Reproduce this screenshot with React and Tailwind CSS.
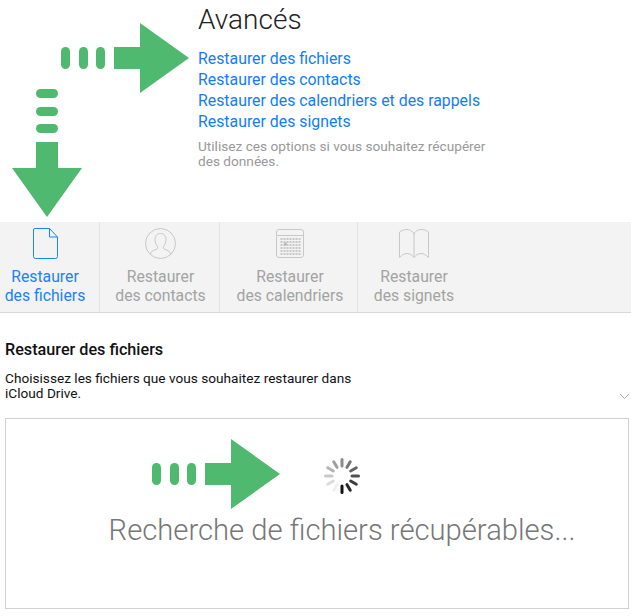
function Arrow({ className }) {
  return (
    <svg className={className} width="128" height="70" viewBox="0 0 128 70" fill="#4fb96f">
      <rect x="0" y="24" width="9" height="22" rx="4.5" />
      <rect x="18" y="24" width="9" height="22" rx="4.5" />
      <rect x="35" y="24" width="9" height="22" rx="4.5" />
      <path d="M53 24H79V0L128 35L79 70V46H53Z" />
    </svg>
  );
}

function ArrowDown({ className }) {
  return (
    <svg className={className} width="70" height="128" viewBox="0 0 70 128" fill="#4fb96f">
      <rect x="24" y="0" width="22" height="9" rx="4.5" />
      <rect x="24" y="18" width="22" height="9" rx="4.5" />
      <rect x="24" y="35" width="22" height="9" rx="4.5" />
      <path d="M24 53H46V79H70L35 128L0 79H24Z" />
    </svg>
  );
}

function Spinner() {
  const bars = [];
  for (let i = 0; i < 12; i++) {
    const shade = 20 + i * 20;
    bars.push(
      <rect
        key={i}
        x="16.5"
        y="0"
        width="3"
        height="9.5"
        rx="1.5"
        fill={`rgb(${shade},${shade},${shade})`}
        transform={`rotate(${180 - i * 30} 18 18)`}
      />
    );
  }
  return (
    <svg width="36" height="36" viewBox="0 0 36 36">
      {bars}
    </svg>
  );
}

function FileIcon() {
  return (
    <svg width="25" height="31" viewBox="0 0 25 31" fill="none" stroke="#1a82fb" strokeWidth="1">
      <path d="M2 .5H16.5L24.5 9V28.5A2 2 0 0 1 22.5 30.5H2.5A2 2 0 0 1 .5 28.5V2A1.5 1.5 0 0 1 2 .5Z" />
      <path d="M16.5 .5V9H24.5" />
    </svg>
  );
}

function ContactIcon() {
  return (
    <svg width="31" height="31" viewBox="0 0 31 31" fill="none" stroke="#c8c8c8" strokeWidth="1">
      <circle cx="15.5" cy="15.5" r="15" />
      <path d="M5.5 26.5C6 23 8 22.5 11 21.5C12.5 21 13 20 12.5 18.5C11 16.5 10 14 10 11.5C10 8 12 5.5 15.5 5.5C19 5.5 21 8 21 11.5C21 14 20 16.5 18.5 18.5C18 20 18.5 21 20 21.5C23 22.5 25 23 25.5 26.5" />
    </svg>
  );
}

function CalendarIcon() {
  const dots = [];
  for (let r = 0; r < 6; r++) {
    for (let c = 0; c < 7; c++) {
      dots.push(<rect key={`${r}-${c}`} x={5 + c * 3} y={9.5 + r * 3} width="1" height="1" fill="#d0d0d0" />);
    }
  }
  return (
    <svg width="28" height="29" viewBox="0 0 28 29" fill="none" stroke="#c8c8c8" strokeWidth="1">
      <rect x=".5" y=".5" width="27" height="28" rx="2.5" />
      <path d="M.5 6.5H27.5" />
      {dots}
      <circle cx="9.5" cy="15" r="1.5" fill="#b5b5b5" stroke="none" />
    </svg>
  );
}

function BookIcon() {
  return (
    <svg width="30" height="30" viewBox="0 0 30 30" fill="none" stroke="#c8c8c8" strokeWidth="1">
      <path d="M15 5.5C14 2.5 11.5 .5 8 .5C5 .5 2.5 1.5 .5 3V28.5C3 26 5.5 24.5 8 24.5C11 24.5 13.5 26.5 15 28.5C16.5 26.5 19 24.5 22 24.5C24.5 24.5 27 26 29.5 28.5V3C27.5 1.5 25 .5 22 .5C18.5 .5 16 2.5 15 5.5Z" />
      <path d="M15 5.5V28.5" />
    </svg>
  );
}

const tabs = [
  { l1: "Restaurer", l2: "des fichiers", w: "w-[100px] pr-[9px]", icon: <FileIcon />, active: true },
  { l1: "Restaurer", l2: "des contacts", w: "w-[120px] pl-[2px]", icon: <ContactIcon /> },
  { l1: "Restaurer", l2: "des calendriers", w: "w-[138px] pl-[3px]", icon: <CalendarIcon /> },
  { l1: "Restaurer", l2: "des signets", w: "w-[112px]", icon: <BookIcon />, last: true },
];

export default function App() {
  return (
    <div className="relative w-[631px] h-[616px] bg-white overflow-hidden font-['Roboto',sans-serif]">
      <Arrow className="absolute left-[61px] top-[23px]" />
      <ArrowDown className="absolute left-[12px] top-[89px]" />
      <Arrow className="absolute left-[152px] top-[439px]" />

      <div className="h-[222px] pl-[198px] pt-[2px]">
        <h1 className="text-[28px] leading-9 font-light text-[#222]">Avancés</h1>
        <div className="mt-[10px] flex flex-col text-[15.85px] leading-[21px] text-[#0f7dfb]">
          <a>Restaurer des fichiers</a>
          <a>Restaurer des contacts</a>
          <a>Restaurer des calendriers et des rappels</a>
          <a>Restaurer des signets</a>
        </div>
        <p className="mt-[7px] text-[13.65px] leading-[15px] text-[#999]">
          Utilisez ces options si vous souhaitez récupérer
          <br />
          des données.
        </p>
      </div>

      <div className="flex h-[91px] bg-[#f3f3f3] border-b border-[#d8d8d8]">
        {tabs.map((t) => (
          <div key={t.l2} className={`${t.w} flex flex-col items-center pt-[5px] ${t.last ? "" : "border-r border-[#e3e3e3]"}`}>
            <div className="h-[33px] flex items-center">{t.icon}</div>
            <div className={`mt-[7px] text-[15.75px] leading-[19px] text-center ${t.active ? "text-[#1a82fb]" : "text-[#a3a3a3]"}`}>
              {t.l1}
              <br />
              {t.l2}
            </div>
          </div>
        ))}
      </div>

      <div className="px-[5px] pt-[28px]">
        <h2 className="text-[16.2px] leading-[18px] font-medium text-[#111]">Restaurer des fichiers</h2>
        <div className="mt-[12px] flex justify-between items-end">
          <p className="text-[13.65px] leading-[15px] text-[#111]">
            Choisissez les fichiers que vous souhaitez restaurer dans
            <br />
            iCloud Drive.
          </p>
          <svg className="mb-[1px] mr-[-4px]" width="11" height="7" viewBox="0 0 11 7" fill="none" stroke="#a8a8a8">
            <path d="M1 1L5.5 5.5L10 1" />
          </svg>
        </div>
        <div className="mt-[17px] h-[191px] mr-[-3px] border border-[#d0d0d0] flex flex-col items-center pt-[39px] pl-[50px]">
          <Spinner />
          <div className="mt-[18px] text-[29.2px] leading-[36px] font-light text-[#777]">Recherche de fichiers récupérables...</div>
        </div>
      </div>
    </div>
  );
}
